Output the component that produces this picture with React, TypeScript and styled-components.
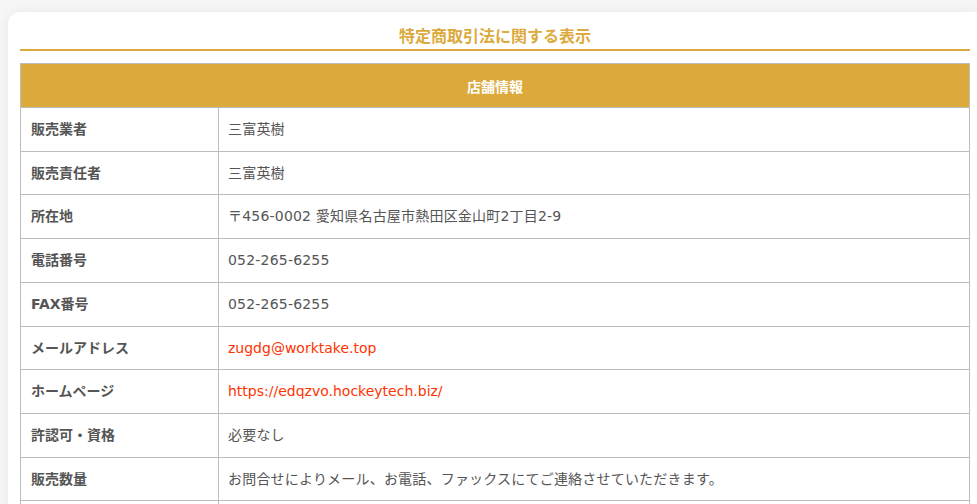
import React from "react";
import styled, { createGlobalStyle } from "styled-components";

const Global = createGlobalStyle`
  html, body { margin: 0; padding: 0; }
  body {
    background: #f6f6f6;
    font-family: "DejaVu Sans", "Noto Sans CJK JP", sans-serif;
    color: #555;
    overflow: hidden;
  }
`;

const Page = styled.div`
  padding: 12px 0 0 8px;
`;

const Card = styled.section`
  width: 969px;
  background: #fff;
  border-radius: 12px 0 0 0;
  box-shadow: 0 0 12px rgba(0, 0, 0, 0.06);
  padding: 12px 7px 40px 12px;
  box-sizing: border-box;
`;

const Title = styled.h1`
  margin: 0 0 12px;
  padding: 0 0 3px;
  font-family: "Noto Sans CJK JP", sans-serif;
  font-size: 16px;
  line-height: 22px;
  font-weight: 700;
  color: #dcaa3c;
  text-align: center;
  border-bottom: 2px solid #dcaa3c;
`;

const Table = styled.table`
  width: 950px;
  border-collapse: collapse;
  table-layout: fixed;
  font-size: 14px;
`;

const HeadCell = styled.th`
  background: #dcaa3c;
  color: #fff;
  font-family: "Noto Sans CJK JP", sans-serif;
  font-weight: 700;
  font-size: 14px;
  height: 43px;
  padding: 0;
  border: 1px solid #bdbdbd;
  text-align: center;
`;

const Label = styled.th`
  width: 198px;
  text-align: left;
  font-weight: 700;
  color: #555;
  padding: 10px 10px;
  line-height: 22.7px;
  border: 1px solid #bdbdbd;
  box-sizing: border-box;
`;

const Value = styled.td`
  padding: 10px 9px;
  line-height: 22.7px;
  border: 1px solid #bdbdbd;
  color: #555;
  letter-spacing: 0.2px;
`;

const Link = styled.a`
  color: #ff3300;
  text-decoration: none;
  letter-spacing: 0;
`;

type Row = { label: string; value: React.ReactNode };

const rows: Row[] = [
  { label: "販売業者", value: "三富英樹" },
  { label: "販売責任者", value: "三富英樹" },
  { label: "所在地", value: "〒456-0002 愛知県名古屋市熱田区金山町2丁目2-9" },
  { label: "電話番号", value: "052-265-6255" },
  { label: "FAX番号", value: "052-265-6255" },
  {
    label: "メールアドレス",
    value: <Link href="#">zugdg@worktake.top</Link>,
  },
  {
    label: "ホームページ",
    value: <Link href="#">https://edqzvo.hockeytech.biz/</Link>,
  },
  { label: "許認可・資格", value: "必要なし" },
  {
    label: "販売数量",
    value: "お問合せによりメール、お電話、ファックスにてご連絡させていただきます。",
  },
  { label: "", value: "" },
];

export default function App() {
  return (
    <>
      <Global />
      <Page>
        <Card>
          <Title>特定商取引法に関する表示</Title>
          <Table>
            <colgroup>
              <col style={{ width: 198 }} />
              <col />
            </colgroup>
            <thead>
              <tr>
                <HeadCell colSpan={2}>店舗情報</HeadCell>
              </tr>
            </thead>
            <tbody>
              {rows.map((r, i) => (
                <tr key={i}>
                  <Label>{r.label}</Label>
                  <Value>{r.value}</Value>
                </tr>
              ))}
            </tbody>
          </Table>
        </Card>
      </Page>
    </>
  );
}
